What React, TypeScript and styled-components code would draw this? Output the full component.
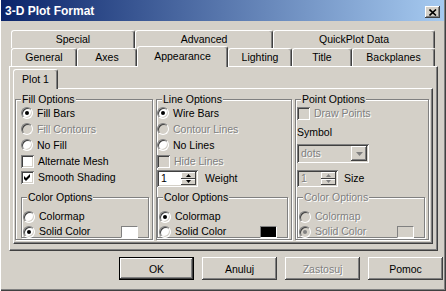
import React from 'react';
import styled, { createGlobalStyle, css } from 'styled-components';

// Windows classic palette
const FACE = '#d4d0c8';
const HILITE = '#ffffff';
const SHADOW = '#808080';
const DARK = '#404040';

const GlobalStyle = createGlobalStyle`
  html, body { margin: 0; padding: 0; background: ${FACE}; }
  body {
    font-family: 'Liberation Sans', Arial, sans-serif;
    font-size: 10.5px;
    color: #000;
  }
`;

const raised = css`
  box-shadow: inset -1px -1px ${DARK}, inset 1px 1px ${HILITE}, inset -2px -2px ${SHADOW},
    inset 2px 2px ${FACE};
`;

const sunken = css`
  box-shadow: inset 1px 1px ${SHADOW}, inset -1px -1px ${HILITE}, inset 2px 2px ${DARK},
    inset -2px -2px ${FACE};
`;

const disabledText = css`
  color: ${SHADOW};
  text-shadow: 1px 1px 0 ${HILITE};
`;

const Window = styled.div`
  width: 446px;
  height: 291px;
  box-sizing: border-box;
  padding: 0 2px 2px 1px;
  background: ${FACE};
  box-shadow: inset 1px 0 ${HILITE}, inset -1px -1px ${DARK}, inset -2px -2px ${SHADOW};
  display: flex;
  flex-direction: column;
`;

const TitleBar = styled.div`
  height: 21px;
  flex: none;
  display: flex;
  align-items: center;
  justify-content: space-between;
  padding: 0 4px 0 4px;
  background: linear-gradient(to right, #0a246a, #a6caf0);
  color: #fff;
  font-weight: bold;
  font-size: 12px;
`;

const CloseButton = styled.div`
  width: 15px;
  height: 12px;
  margin-top: 3px;
  box-sizing: border-box;
  background: ${FACE};
  ${raised}
  display: flex;
  align-items: center;
  justify-content: center;
`;

const Body = styled.div`
  padding-left: 8px;
  display: flex;
  flex-direction: column;
`;

const TabStrip = styled.div`
  margin: 9px 0 0 2px;
  width: 424px;
`;

const TabRow = styled.div`
  display: flex;
  height: 18px;
`;

const Tab = styled.div<{ $w: number; $active?: boolean }>`
  flex: 0 0 ${p => p.$w}px;
  box-sizing: border-box;
  height: 18px;
  line-height: 17px;
  text-align: center;
  background: ${FACE};
  border-top: 1px solid ${HILITE};
  border-left: 1px solid ${HILITE};
  border-right: 1px solid ${DARK};
  border-radius: 3px 3px 0 0;
  box-shadow: inset -1px 0 ${SHADOW};
  white-space: nowrap;
  ${p =>
    p.$active &&
    css`
      position: relative;
      z-index: 1;
      height: 21px;
      margin-top: -2px;
      line-height: 18px;
    `}
`;

const TabPanel = styled.div<{ $w: number; $h: number }>`
  width: ${p => p.$w}px;
  height: ${p => p.$h}px;
  box-sizing: border-box;
  border-top: 1px solid ${HILITE};
  border-left: 1px solid ${HILITE};
  border-right: 1px solid ${DARK};
  border-bottom: 1px solid ${DARK};
  box-shadow: inset -1px -1px ${SHADOW};
`;

const OuterPanel = styled(TabPanel)`
  padding: 2px 0 0 3px;
`;

const InnerTab = styled.div`
  position: relative;
  z-index: 1;
  width: 45px;
  height: 20px;
  box-sizing: border-box;
  line-height: 18px;
  text-align: center;
  background: ${FACE};
  border-top: 1px solid ${HILITE};
  border-left: 1px solid ${HILITE};
  border-right: 1px solid ${DARK};
  border-radius: 3px 3px 0 0;
  box-shadow: inset -1px 0 ${SHADOW};
`;

const InnerPanel = styled(TabPanel)`
  margin-top: -1px;
  padding: 10px 0 0 1px;
  display: grid;
  grid-template-columns: 138px 136px 134px;
  column-gap: 3px;
  align-items: start;
`;

const GroupBox = styled.div<{ $h: number }>`
  height: ${p => p.$h}px;
  box-sizing: border-box;
  border: 1px solid ${SHADOW};
  box-shadow: inset 1px 1px ${HILITE}, 1px 1px ${HILITE};
  display: flex;
  flex-direction: column;
`;

const SubGroup = styled(GroupBox)`
  margin-top: auto;
  margin-right: 3px;
`;

const Legend = styled.div<{ $gap: number; $dis?: boolean }>`
  align-self: flex-start;
  height: 12px;
  line-height: 12px;
  margin: -7px 0 ${p => p.$gap}px 5px;
  padding: 0 1px;
  background: ${FACE};
  ${p => p.$dis && disabledText}
`;

const GroupBody = styled.div<{ $pad: number }>`
  flex: 1;
  display: flex;
  flex-direction: column;
  padding: 0 0 1px ${p => p.$pad}px;
`;

const Row = styled.div<{ $h?: number; $mt?: number; $gap?: number }>`
  display: flex;
  align-items: center;
  gap: ${p => p.$gap ?? 4}px;
  height: ${p => p.$h ?? 16}px;
  margin-top: ${p => p.$mt ?? 0}px;
`;

const Label = styled.span<{ $dis?: boolean }>`
  line-height: 13px;
  white-space: nowrap;
  ${p => p.$dis && disabledText}
`;

const RadioCircle = styled.span<{ $on?: boolean; $dis?: boolean }>`
  flex: none;
  width: 12px;
  height: 12px;
  box-sizing: border-box;
  border-radius: 50%;
  border: 1px solid;
  border-color: ${SHADOW} ${HILITE} ${HILITE} ${SHADOW};
  box-shadow: inset 1px 1px ${DARK}, inset -1px -1px ${FACE};
  background: ${p => (p.$dis ? FACE : HILITE)};
  display: flex;
  align-items: center;
  justify-content: center;
  &::after {
    content: '';
    display: ${p => (p.$on ? 'block' : 'none')};
    width: 4px;
    height: 4px;
    border-radius: 50%;
    background: ${p => (p.$dis ? SHADOW : '#000')};
  }
`;

const CheckSquare = styled.span<{ $dis?: boolean }>`
  flex: none;
  width: 13px;
  height: 13px;
  box-sizing: border-box;
  background: ${p => (p.$dis ? FACE : HILITE)};
  ${sunken}
  display: flex;
  align-items: center;
  justify-content: center;
`;

const Swatch = styled.span<{ $color: string }>`
  flex: none;
  margin-left: auto;
  margin-right: 10px;
  width: 17px;
  height: 12px;
  box-sizing: border-box;
  background: ${p => p.$color};
  border: 1px solid;
  border-color: ${SHADOW} ${HILITE} ${HILITE} ${SHADOW};
`;

const Spinner = styled.div<{ $dis?: boolean }>`
  flex: none;
  display: flex;
  width: 41px;
  height: 17px;
  box-sizing: border-box;
  padding: 2px;
  background: ${p => (p.$dis ? FACE : HILITE)};
  ${sunken}
`;

const SpinValue = styled.span<{ $dis?: boolean }>`
  flex: 1;
  padding-left: 2px;
  line-height: 13px;
  ${p => p.$dis && disabledText}
`;

const SpinButtons = styled.div`
  width: 15px;
  display: flex;
  flex-direction: column;
`;

const SpinHalf = styled.div`
  flex: 1;
  background: ${FACE};
  box-shadow: inset -1px -1px ${DARK}, inset 1px 1px ${HILITE};
  display: flex;
  align-items: center;
  justify-content: center;
`;

const Combo = styled.div`
  display: flex;
  width: 72px;
  height: 19px;
  box-sizing: border-box;
  padding: 2px;
  background: ${FACE};
  ${sunken}
`;

const ComboText = styled.span`
  flex: 1;
  padding-left: 2px;
  line-height: 15px;
  ${disabledText}
`;

const ComboButton = styled.div`
  width: 16px;
  background: ${FACE};
  ${raised}
  display: flex;
  align-items: center;
  justify-content: center;
`;

const Footer = styled.div`
  display: flex;
  justify-content: flex-end;
  gap: 8px;
  margin-top: 6px;
  padding-right: 1px;
`;

const Button = styled.div<{ $default?: boolean; $dis?: boolean }>`
  width: 75px;
  height: 23px;
  box-sizing: border-box;
  display: flex;
  align-items: center;
  justify-content: center;
  background: ${FACE};
  ${raised}
  ${p =>
    p.$default &&
    css`
      border: 1px solid #000;
    `}
  ${p => p.$dis && disabledText}
`;

const Radio: React.FC<{ on?: boolean; dis?: boolean; label: string; swatch?: string }> = ({
  on,
  dis,
  label,
  swatch,
}) => (
  <>
    <RadioCircle $on={on} $dis={dis} />
    <Label $dis={dis}>{label}</Label>
    {swatch && <Swatch $color={swatch} />}
  </>
);

const Check: React.FC<{ on?: boolean; dis?: boolean; label: string }> = ({ on, dis, label }) => (
  <>
    <CheckSquare $dis={dis}>
      {on && (
        <svg width="7" height="7" viewBox="0 0 7 7">
          <polygon points="0,2 2,4 6,0 6,3 2,7 0,5" fill="#000" />
        </svg>
      )}
    </CheckSquare>
    <Label $dis={dis}>{label}</Label>
  </>
);

const Arrow: React.FC<{ up?: boolean; color?: string; w?: number }> = ({ up, color = '#000', w = 5 }) => {
  const h = Math.ceil(w / 2);
  const pts = up ? `0,${h} ${w / 2},0 ${w},${h}` : `0,0 ${w / 2},${h} ${w},0`;
  return (
    <svg width={w} height={h} viewBox={`0 0 ${w} ${h}`}>
      <polygon points={pts} fill={color} />
    </svg>
  );
};

const Spin: React.FC<{ dis?: boolean }> = ({ dis }) => (
  <Spinner $dis={dis}>
    <SpinValue $dis={dis}>1</SpinValue>
    <SpinButtons>
      <SpinHalf>
        <Arrow up w={5} color={dis ? SHADOW : '#000'} />
      </SpinHalf>
      <SpinHalf>
        <Arrow w={5} color={dis ? SHADOW : '#000'} />
      </SpinHalf>
    </SpinButtons>
  </Spinner>
);

const ColorOptions: React.FC<{ colormap?: boolean; dis?: boolean; swatch: string }> = ({
  colormap,
  dis,
  swatch,
}) => (
  <SubGroup $h={41}>
    <Legend $gap={6} $dis={dis}>
      Color Options
    </Legend>
    <GroupBody $pad={1}>
      <Row $h={15}>
        <Radio on={colormap} dis={dis} label="Colormap" />
      </Row>
      <Row $h={15}>
        <Radio on={!colormap} dis={dis} label="Solid Color" swatch={swatch} />
      </Row>
    </GroupBody>
  </SubGroup>
);

const App: React.FC = () => (
  <>
    <GlobalStyle />
    <Window>
      <TitleBar>
        <span>3-D Plot Format</span>
        <CloseButton>
          <svg width="8" height="7" viewBox="0 0 8 7">
            <path d="M0.5 0.5 L7 6.5 M7 0.5 L0.5 6.5" stroke="#000" strokeWidth="1.6" />
          </svg>
        </CloseButton>
      </TitleBar>

      <Body>
        <TabStrip>
          <TabRow>
            <Tab $w={124}>Special</Tab>
            <Tab $w={138}>Advanced</Tab>
            <Tab $w={162}>QuickPlot Data</Tab>
          </TabRow>
          <TabRow>
            <Tab $w={66}>General</Tab>
            <Tab $w={60}>Axes</Tab>
            <Tab $w={91} $active>
              Appearance
            </Tab>
            <Tab $w={64}>Lighting</Tab>
            <Tab $w={60}>Title</Tab>
            <Tab $w={83}>Backplanes</Tab>
          </TabRow>
        </TabStrip>

        <OuterPanel $w={429} $h={185}>
          <InnerTab>Plot 1</InnerTab>
          <InnerPanel $w={420} $h={156}>
            <GroupBox $h={141}>
              <Legend $gap={0}>Fill Options</Legend>
              <GroupBody $pad={5}>
                <Row>
                  <Radio on label="Fill Bars" />
                </Row>
                <Row>
                  <Radio dis label="Fill Contours" />
                </Row>
                <Row>
                  <Radio label="No Fill" />
                </Row>
                <Row>
                  <Check label="Alternate Mesh" />
                </Row>
                <Row>
                  <Check on label="Smooth Shading" />
                </Row>
                <ColorOptions swatch="#ffffff" />
              </GroupBody>
            </GroupBox>

            <GroupBox $h={141}>
              <Legend $gap={0}>Line Options</Legend>
              <GroupBody $pad={0}>
                <Row>
                  <Radio on label="Wire Bars" />
                </Row>
                <Row>
                  <Radio dis label="Contour Lines" />
                </Row>
                <Row>
                  <Radio label="No Lines" />
                </Row>
                <Row>
                  <Check dis label="Hide Lines" />
                </Row>
                <Row $h={17} $mt={1} $gap={7}>
                  <Spin />
                  <Label>Weight</Label>
                </Row>
                <ColorOptions colormap swatch="#000000" />
              </GroupBody>
            </GroupBox>

            <GroupBox $h={141}>
              <Legend $gap={0}>Point Options</Legend>
              <GroupBody $pad={1}>
                <Row>
                  <Check dis label="Draw Points" />
                </Row>
                <Row $mt={3}>
                  <Label>Symbol</Label>
                </Row>
                <Row $h={19} $mt={4}>
                  <Combo>
                    <ComboText>dots</ComboText>
                    <ComboButton>
                      <Arrow w={7} color={SHADOW} />
                    </ComboButton>
                  </Combo>
                </Row>
                <Row $h={17} $mt={7} $gap={6}>
                  <Spin dis />
                  <Label>Size</Label>
                </Row>
                <ColorOptions dis swatch={FACE} />
              </GroupBody>
            </GroupBox>
          </InnerPanel>
        </OuterPanel>
      </Body>

      <Footer>
        <Button $default>OK</Button>
        <Button>Anuluj</Button>
        <Button $dis>Zastosuj</Button>
        <Button>Pomoc</Button>
      </Footer>
    </Window>
  </>
);

export default App;
